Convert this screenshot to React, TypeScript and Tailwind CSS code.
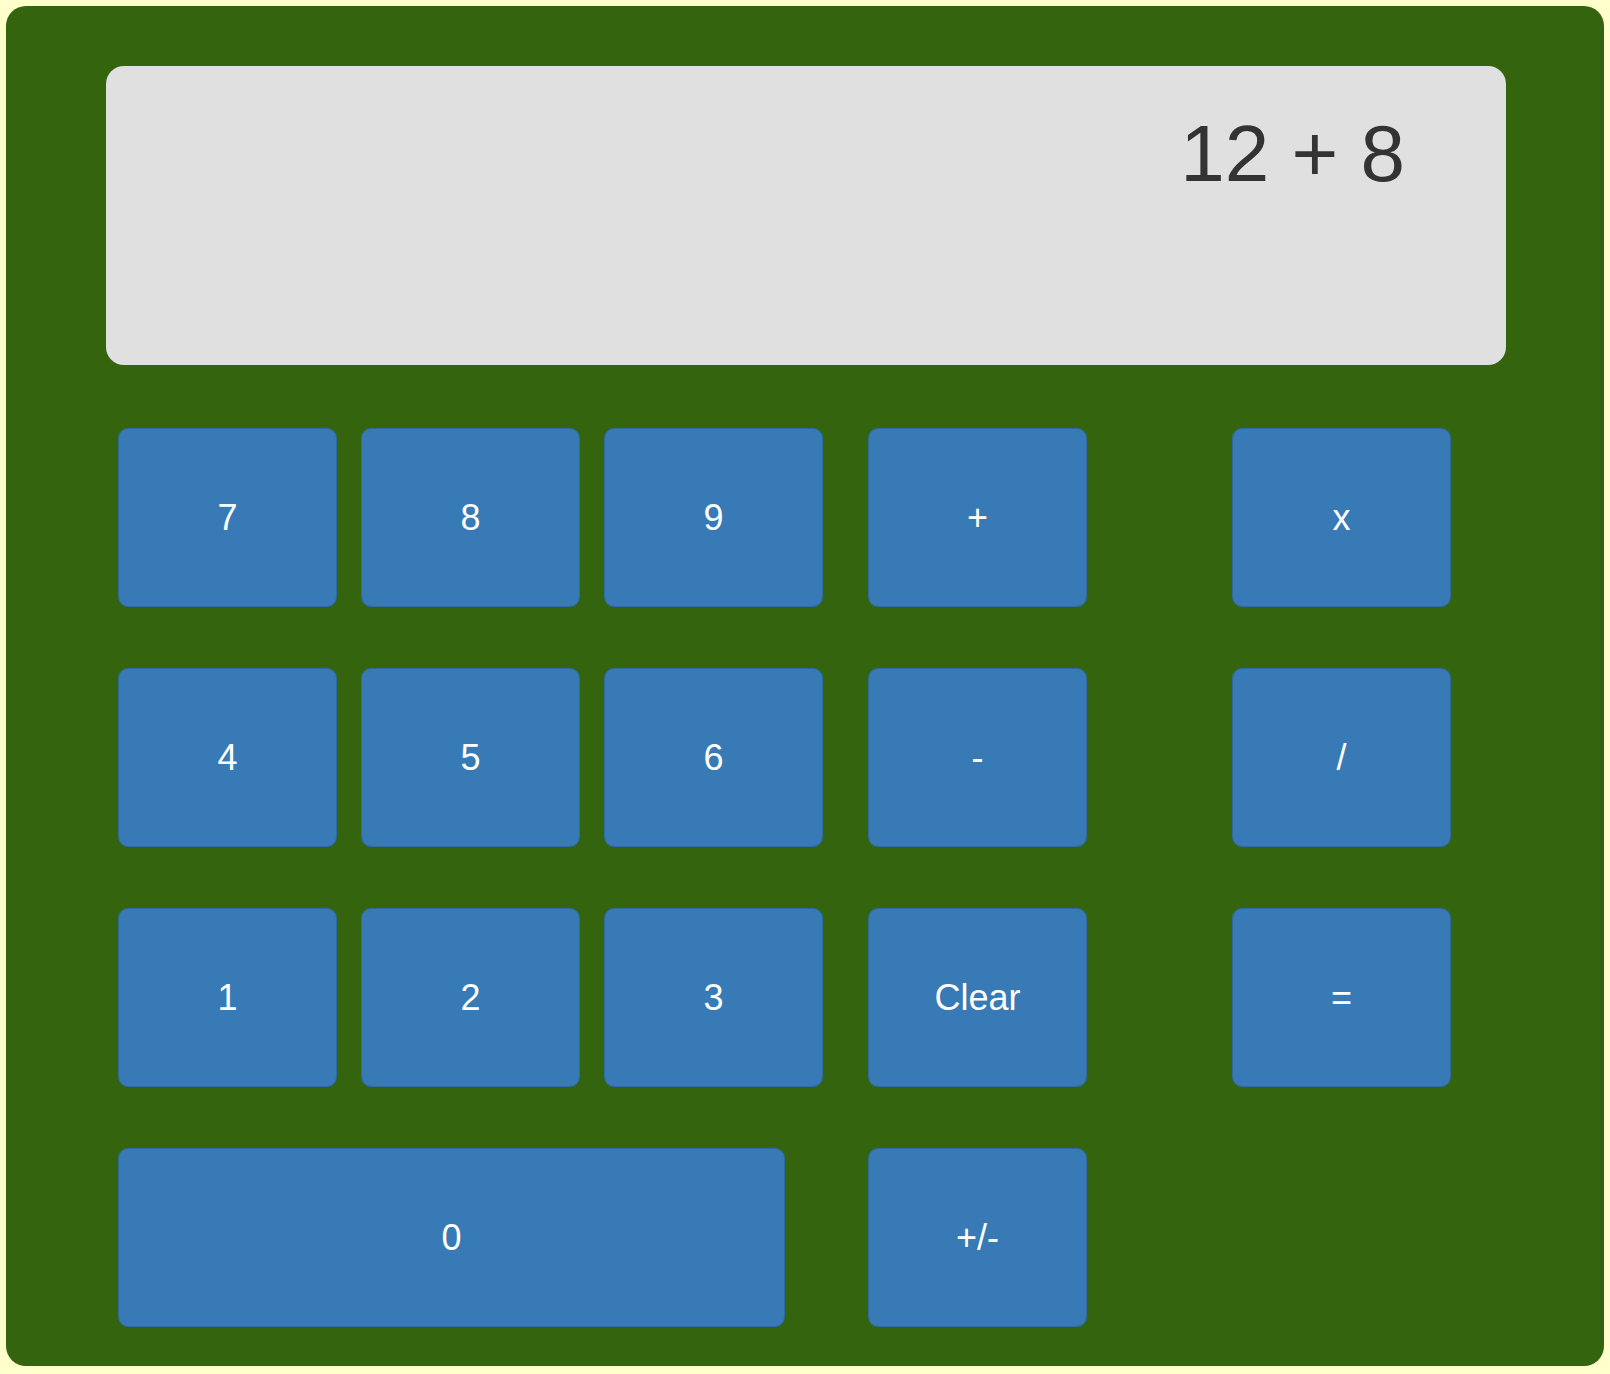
const rows = [
  [
    { label: "7", ml: "" },
    { label: "8", ml: "ml-[24px]" },
    { label: "9", ml: "ml-[24px]" },
    { label: "+", ml: "ml-[45px]" },
    { label: "x", ml: "ml-[145px]" },
  ],
  [
    { label: "4", ml: "" },
    { label: "5", ml: "ml-[24px]" },
    { label: "6", ml: "ml-[24px]" },
    { label: "-", ml: "ml-[45px]" },
    { label: "/", ml: "ml-[145px]" },
  ],
  [
    { label: "1", ml: "" },
    { label: "2", ml: "ml-[24px]" },
    { label: "3", ml: "ml-[24px]" },
    { label: "Clear", ml: "ml-[45px]" },
    { label: "=", ml: "ml-[145px]" },
  ],
]

function Key({ label, className }: { label: string; className: string }) {
  return (
    <button
      className={`flex h-[179px] items-center justify-center rounded-[10px] border border-[#2d6aa0] bg-[#377ab5] text-[36px] text-white ${className}`}
    >
      {label}
    </button>
  )
}

export default function App() {
  return (
    <div
      className="min-h-screen bg-[#ffffcc] px-[6px] pt-[6px] pb-[8px]"
      style={{ fontFamily: '"Liberation Sans", Arial, sans-serif' }}
    >
      <div className="h-[1360px] w-[1598px] rounded-[20px] bg-[#35640e] px-[100px] pt-[60px]">
        {/* display */}
        <div className="h-[299px] w-[1400px] rounded-[18px] bg-[#e0e0e0] pr-[101px] pt-[48px] text-right text-[80px] leading-none text-[#333333]">
          12 + 8
        </div>

        {/* keys */}
        <div className="ml-[12px] mt-[63px] flex flex-col gap-[61px]">
          {rows.map((row, i) => (
            <div key={i} className="flex">
              {row.map((k) => (
                <Key key={k.label} label={k.label} className={`w-[219px] ${k.ml}`} />
              ))}
            </div>
          ))}
          <div className="flex">
            <Key label="0" className="w-[667px]" />
            <Key label="+/-" className="ml-[83px] w-[219px]" />
          </div>
        </div>
      </div>
    </div>
  )
}
